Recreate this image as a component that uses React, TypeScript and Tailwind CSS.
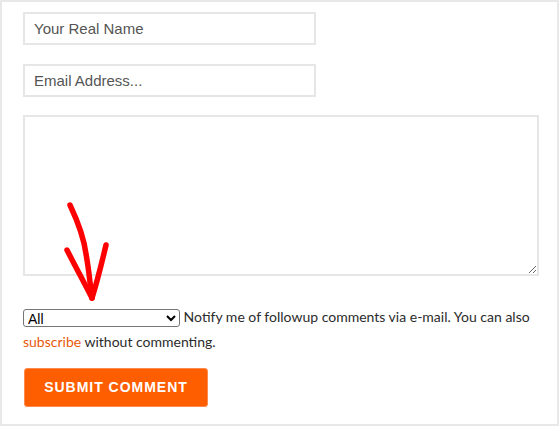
export default function App() {
  return (
    <div className="relative w-[559px] h-[426px] border-2 border-[#e8e8e8] bg-white pl-[21px] pt-[10px] font-['Liberation_Sans',Arial,sans-serif]">
      <input
        type="text"
        placeholder="Your Real Name"
        className="block w-[293px] h-[33px] border-2 border-[#e6e6e6] px-[9px] text-[15px] text-[#333] placeholder:text-[#555] outline-none"
      />
      <input
        type="text"
        placeholder="Email Address..."
        className="block mt-[19px] w-[293px] h-[33px] border-2 border-[#e6e6e6] px-[9px] text-[15px] text-[#333] placeholder:text-[#555] outline-none"
      />
      <textarea className="block mt-[18px] w-[516px] h-[161px] border-2 border-[#e6e6e6] outline-none" />

      {/* subscribe row */}
      <div className="mt-[28px] w-[520px] text-[14px] leading-[25px] text-[#2b2b2b] font-['Lato',sans-serif]">
        <select className="w-[157px] h-[18px] border border-[#767676] rounded-[3px] bg-white text-[14px] leading-[16px] text-black align-middle font-['Liberation_Sans',Arial,sans-serif]">
          <option>All</option>
          <option>Replies to my comments</option>
        </select>{' '}
        Notify me of followup comments via e-mail. You can also{' '}
        <a href="#" className="text-[#e8590c]">subscribe</a> without commenting.
      </div>

      <button
        type="button"
        className="block mt-[14px] ml-[1px] w-[184px] h-[39px] rounded-[3px] border border-[#ff8a4c] bg-[#ff5e00] text-white text-[14px] font-bold tracking-[0.07em]"
      >
        SUBMIT COMMENT
      </button>

      {/* hand drawn arrow */}
      <svg className="absolute left-0 top-0 pointer-events-none" width="559" height="426" viewBox="0 0 559 426">
        <g fill="none" stroke="#ff0000" strokeWidth="5.5" strokeLinecap="round" strokeLinejoin="round">
          <path d="M68 203 C76 220 82 236 84 252 C87 268 88 282 90 296" />
          <path d="M65 248 C72 262 82 280 90 296" />
          <path d="M104 243 C100 260 95 280 90 296" />
        </g>
      </svg>
    </div>
  )
}
